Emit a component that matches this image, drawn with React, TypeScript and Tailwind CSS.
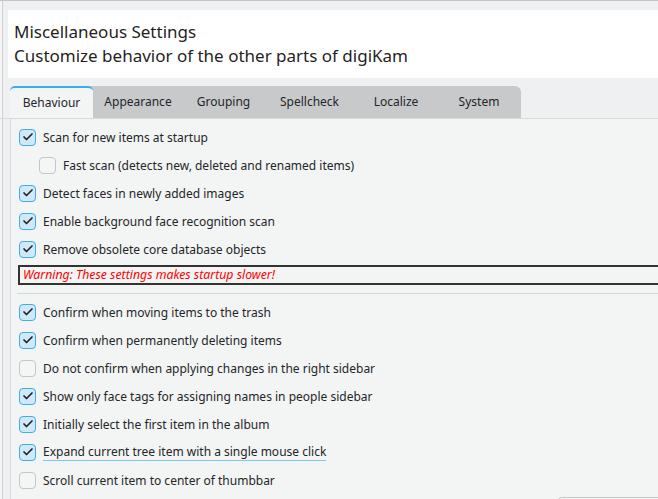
import { Check } from "lucide-react";

const tabs = [
  { label: "Behaviour", w: "w-[83px]" },
  { label: "Appearance", w: "w-[90px]" },
  { label: "Grouping", w: "w-[81px]" },
  { label: "Spellcheck", w: "w-[91px]" },
  { label: "Localize", w: "w-[82px]" },
  { label: "System", w: "w-[84px]" },
];

const startupItems = [
  { label: "Scan for new items at startup", checked: true },
  { label: "Fast scan (detects new, deleted and renamed items)", checked: false, indent: true },
  { label: "Detect faces in newly added images", checked: true },
  { label: "Enable background face recognition scan", checked: true },
  { label: "Remove obsolete core database objects", checked: true },
];

const confirmItems = [
  { label: "Confirm when moving items to the trash", checked: true },
  { label: "Confirm when permanently deleting items", checked: true },
  { label: "Do not confirm when applying changes in the right sidebar", checked: false },
  { label: "Show only face tags for assigning names in people sidebar", checked: true },
  { label: "Initially select the first item in the album", checked: true },
  { label: "Expand current tree item with a single mouse click", checked: true, focus: true },
  { label: "Scroll current item to center of thumbbar", checked: false },
];

function CheckRow({
  label,
  checked,
  indent,
  focus,
}: {
  label: string;
  checked: boolean;
  indent?: boolean;
  focus?: boolean;
}) {
  return (
    <div className={`flex h-[28px] items-center gap-[7px] ${indent ? "pl-[22px]" : "pl-[2px]"}`}>
      <div
        className={`flex h-[17px] w-[17px] shrink-0 items-center justify-center rounded-[4px] border ${
          checked ? "border-[#3daee9] bg-[#cfe9f8]" : "border-[#c4c6c8] bg-[#f4f5f5]"
        }`}
      >
        {checked && <Check size={12} strokeWidth={3.5} className="text-[#232629]" />}
      </div>
      <span className={`leading-[17px] ${focus ? "border-b border-[#7cc7ee]" : ""}`}>{label}</span>
    </div>
  );
}

export default function App() {
  return (
    <div className="flex h-[499px] w-[658px] overflow-hidden border-t border-[#c4c5c6] bg-[#eff0f1] font-['Noto_Sans',sans-serif] text-[#232629]">
      {/* window edge */}
      <div className="w-[3px] shrink-0 border-r border-[#cfd0d1] bg-[#f4f5f5]" />

      <div className="flex min-w-0 flex-1 flex-col pt-[9px] pl-[5px]">
        {/* Page header */}
        <div className="h-[68px] shrink-0 bg-white pt-[10px] pl-[6px] text-[17px] leading-[24px] text-[#1f1f1f]">
          <div>Miscellaneous Settings</div>
          <div>Customize behavior of the other parts of digiKam</div>
        </div>

        {/* Tabs */}
        <div className="mt-[8px] flex h-[32px] shrink-0 pl-[2px]">
          <div className="flex rounded-t-[6px] bg-[#c8c9ca] text-[12px]">
            {tabs.map((t, i) =>
              i === 0 ? (
                <div
                  key={t.label}
                  className={`flex ${t.w} items-center justify-center rounded-t-[5px] border-t-2 border-[#3daee9] bg-[#f3f4f4] pb-[1px]`}
                >
                  {t.label}
                </div>
              ) : (
                <div key={t.label} className={`flex ${t.w} items-center justify-center`}>
                  {t.label}
                </div>
              ),
            )}
          </div>
        </div>

        {/* Tab pane */}
        <div className="-ml-[8px] min-h-0 flex-1 border-t border-[#d8d9da] pl-[10px]">
          <div className="h-full border-l border-[#d8d9da] bg-[#f3f4f4] pt-[4px] pl-[6px] text-[12px]">
            {startupItems.map((it) => (
              <CheckRow key={it.label} {...it} />
            ))}

            <div className="mt-[2px] ml-[1px] h-[20px] border-2 border-r-0 border-[#333] pl-[3px] text-[12.3px] leading-[16px] text-[#ff0000] italic">
              Warning: These settings makes startup slower!
            </div>

            <div className="mt-[8px] border-t border-[#d5d6d7]" />

            <div className="pt-[4px]">
              {confirmItems.map((it) => (
                <CheckRow key={it.label} {...it} />
              ))}
            </div>

            <div className="mt-[3px] ml-auto h-[10px] w-[100px] rounded-tl-[4px] border-t border-l border-[#c4c6c8] bg-[#f7f8f8]" />
          </div>
        </div>
      </div>
    </div>
  );
}
